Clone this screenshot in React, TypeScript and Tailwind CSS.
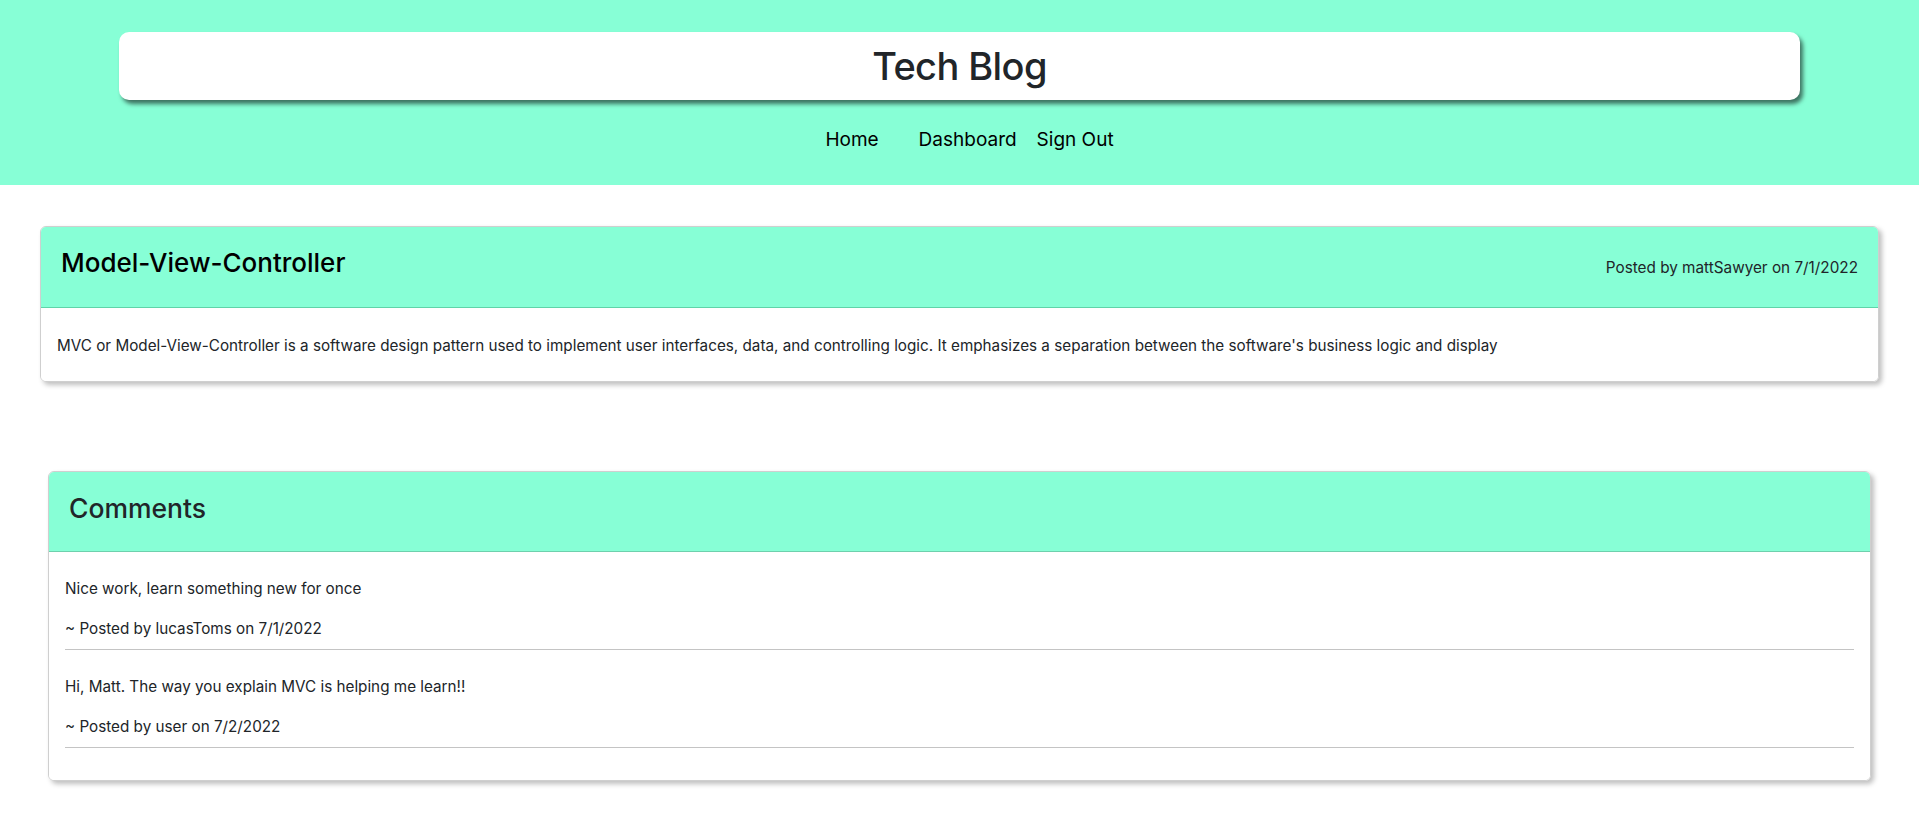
import React from 'react';

interface Comment {
  id: number;
  text: string;
  author: string;
  date: string;
}

const comments: Comment[] = [
  { id: 1, text: 'Nice work, learn something new for once', author: 'lucasToms', date: '7/1/2022' },
  { id: 2, text: 'Hi, Matt. The way you explain MVC is helping me learn!!', author: 'user', date: '7/2/2022' },
];

const font = { fontFamily: 'Inter, "Noto Sans", sans-serif' };

const App: React.FC = () => {
  return (
    <div className="min-h-screen bg-white text-[#212529]" style={font}>
      {/* Header */}
      <header className="bg-[#87ffd6] pt-8 pb-[30px]">
        <div className="mx-[119px] h-[68px] flex items-center justify-center bg-white rounded-[10px] shadow-[3px_4px_4px_rgba(0,0,0,0.55)]">
          <h1 className="text-[38px] font-medium leading-none tracking-[-0.6px]">Tech Blog</h1>
        </div>
        <nav className="mt-[25px] flex justify-center pl-[20px] text-[19px] leading-[30px] text-black">
          <a href="#" className="mr-10">Home</a>
          <a href="#" className="mr-5">Dashboard</a>
          <a href="#">Sign Out</a>
        </nav>
      </header>

      <main>
        {/* Post */}
        <section className="mx-10 mt-[41px] border border-[#cfcfcf] rounded-md overflow-hidden shadow-[3px_3px_5px_rgba(0,0,0,0.25)]">
          <div className="bg-[#87ffd6] border-b border-[#5fd4a9] px-5 pt-[19px] pb-[27px] flex items-end justify-between">
            <h2 className="text-[26px] font-medium leading-[34px] text-black">Model-View-Controller</h2>
            <p className="text-[15.3px] leading-6">Posted by mattSawyer on 7/1/2022</p>
          </div>
          <div className="bg-white px-4 pt-[26px] pb-[23px]">
            <p className="text-[15.25px] leading-6">
              MVC or Model-View-Controller is a software design pattern used to implement user interfaces, data, and controlling logic. It emphasizes a separation between the software's business logic and display
            </p>
          </div>
        </section>

        {/* Comments */}
        <section className="mx-12 mt-[89px] border border-[#cfcfcf] rounded-md overflow-hidden shadow-[3px_3px_5px_rgba(0,0,0,0.25)]">
          <div className="bg-[#87ffd6] border-b border-[#6fd0ad] px-5 pt-[19px] pb-[26px]">
            <h2 className="text-[26.5px] font-medium leading-[34px]">Comments</h2>
          </div>
          <div className="bg-white px-4 pt-[25px] pb-8">
            {comments.map((c, i) => (
              <div key={c.id} className={i > 0 ? 'mt-[25px]' : ''}>
                <p className="text-[15.25px] leading-6">{c.text}</p>
                <p className="mt-4 text-[15.25px] leading-6">~ Posted by {c.author} on {c.date}</p>
                <hr className="mt-2 border-t border-[#c4c4c4]" />
              </div>
            ))}
          </div>
        </section>
      </main>
    </div>
  );
};

export default App;
